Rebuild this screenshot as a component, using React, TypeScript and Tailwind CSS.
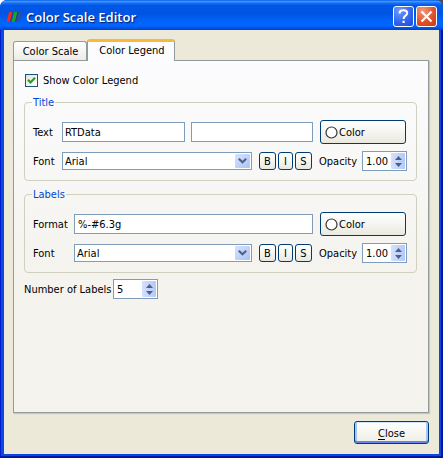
import { useState, type ReactNode } from "react";

const field =
  "h-5 min-w-0 border border-[#7f9db9] bg-white text-[11px] outline-none";
const pushButton =
  "rounded-[3px] border border-[#003c74] bg-linear-to-b from-white via-[#f5f5f1] to-[#e9e8df]";
const caption = "shrink-0 pt-[2px]";

function FontSelect({ id }: { id: string }) {
  return (
    <div className="relative flex h-[18px] min-w-0 flex-1 border border-[#7f9db9] bg-white">
      <select
        id={id}
        className="w-full appearance-none bg-white pt-[2px] pr-5 pl-[2px] text-[11px] leading-[14px] outline-none"
      >
        <option>Arial</option>
      </select>
      <span className="pointer-events-none absolute top-px right-px flex h-[14px] w-[15px] items-center justify-center rounded-[1px] bg-linear-to-br from-[#d6e2ff] to-[#acc3f6]">
        <svg width="9" height="6" viewBox="0 0 9 6" aria-hidden="true">
          <path d="M0.8 0.8L4.5 4.3L8.2 0.8" fill="none" stroke="#4d6185" strokeWidth="2.1" />
        </svg>
      </span>
    </div>
  );
}

function SpinBox({ id, value, step, digits }: { id: string; value: number; step: number; digits: number }) {
  const [current, setCurrent] = useState(value);
  return (
    <div className="flex h-5 w-[45px] shrink-0 border border-[#7f9db9] bg-white py-px pr-px">
      <input
        id={id}
        value={current.toFixed(digits)}
        onChange={(e) => setCurrent(Number(e.target.value) || 0)}
        className="w-0 min-w-0 flex-1 bg-white pt-[2px] pl-[3px] text-[11px] outline-none"
      />
      <div className="flex w-[14px] flex-col">
        <button
          type="button"
          aria-label="Increase"
          onClick={() => setCurrent(current + step)}
          className="flex h-2 items-center justify-center rounded-t-[1px] bg-linear-to-r from-[#d3e0ff] to-[#b3c9f9] pt-px"
        >
          <svg width="7" height="4" viewBox="0 0 7 4" aria-hidden="true">
            <path d="M0 4L3.5 0L7 4Z" fill="#4d6185" />
          </svg>
        </button>
        <button
          type="button"
          aria-label="Decrease"
          onClick={() => setCurrent(current - step)}
          className="flex h-2 items-center justify-center rounded-b-[1px] bg-linear-to-r from-[#d3e0ff] to-[#b3c9f9]"
        >
          <svg width="7" height="4" viewBox="0 0 7 4" aria-hidden="true">
            <path d="M0 0L3.5 4L7 0Z" fill="#4d6185" />
          </svg>
        </button>
      </div>
    </div>
  );
}

function ColorButton() {
  return (
    <button
      type="button"
      className={`${pushButton} flex h-6 w-[86px] shrink-0 items-center gap-px pl-1`}
    >
      <svg width="13" height="13" viewBox="0 0 13 13" aria-hidden="true">
        <circle cx="6.5" cy="6.5" r="5.5" fill="#fff" stroke="#333" strokeWidth="1.2" />
      </svg>
      <span className={caption}>Color</span>
    </button>
  );
}

function StyleButtons() {
  return (
    <div className="mx-[7px] flex shrink-0 gap-[2px]">
      <button type="button" className={`${pushButton} h-[18px] w-[17px] pt-[2px]`}>B</button>
      <button type="button" className={`${pushButton} h-[18px] w-[15px] pt-[2px]`}>I</button>
      <button type="button" className={`${pushButton} h-[18px] w-[17px] pt-[2px]`}>S</button>
    </div>
  );
}

function Group({ title, children }: { title: string; children: ReactNode }) {
  return (
    <fieldset className="min-w-0 rounded-[4px] border border-[#d0d0bf] px-[7px] pb-[9px]">
      <legend className="px-px pt-[2px] leading-3 text-[#0046d5]">{title}</legend>
      <div className="flex flex-col gap-[7px] pt-[11px] pl-px">{children}</div>
    </fieldset>
  );
}

function FontRow({ name, labelWidth }: { name: string; labelWidth: string }) {
  return (
    <div className="flex items-center pr-[2px]">
      <label htmlFor={`${name}-font`} className={`${labelWidth} ${caption}`}>Font</label>
      <FontSelect id={`${name}-font`} />
      <StyleButtons />
      <label htmlFor={`${name}-opacity`} className={`${caption} w-[43px]`}>Opacity</label>
      <SpinBox id={`${name}-opacity`} value={1} step={0.05} digits={2} />
    </div>
  );
}

export default function App() {
  return (
    <div className="bg-[linear-gradient(to_right,#ffffff_50%,#4b4b52_50%)]">
      <div className="flex min-h-screen flex-col overflow-hidden rounded-t-[7px] bg-[#0a48e0] font-['DejaVu_Sans_Condensed','DejaVu_Sans',sans-serif] text-[11px] leading-[14px] text-black">
        <header className="flex h-[30px] shrink-0 items-center bg-[linear-gradient(to_bottom,#0a5ce8_0%,#3f96ff_5%,#1a72f4_10%,#0058e6_18%,#0054e3_45%,#0062f8_70%,#0066ff_86%,#0050e0_94%,#003fd0_100%)] pt-[3px] pr-[6px] pl-[6px]">
          <svg width="16" height="12" viewBox="0 0 16 12" aria-hidden="true">
            <path d="M3 1H6.5L4 11H0.5Z" fill="#f02a2a" />
            <path d="M8 1H11.5L9 11H5.5Z" fill="#16a52b" />
            <path d="M12.5 1H16L13.5 11H10Z" fill="#2a50a8" />
            <path d="M7 1L4.5 11M12 1L9.5 11" stroke="#23406f" strokeWidth="1" />
          </svg>
          <h1 className="ml-1 flex-1 font-['Open_Sans','Noto_Sans',sans-serif] text-[13px] font-semibold text-white [text-shadow:1px_1px_1px_#0b1a70]">
            Color Scale Editor
          </h1>
          <button
            type="button"
            aria-label="Help"
            className="flex size-[21px] items-center justify-center rounded-[3px] border border-white bg-[radial-gradient(circle_at_30%_20%,#6f9bff,#2f62ea_60%,#1c4cdc)]"
          >
            <svg width="11" height="15" viewBox="0 0 11 15" fill="none" aria-hidden="true">
              <path d="M1.7 4.5V3.5Q2 1.2 5.5 1.2Q9.2 1.2 9.2 4Q9.2 5.5 7.3 6.8Q5.6 8 5.6 10" stroke="#fff" strokeWidth="2" />
              <path d="M4.5 11.8H6.7V14H4.5Z" fill="#fff" />
            </svg>
          </button>
          <button
            type="button"
            aria-label="Close window"
            className="ml-[2px] flex size-[21px] items-center justify-center rounded-[3px] border border-white bg-[radial-gradient(circle_at_30%_20%,#f09a82,#e0502c_55%,#c93a12)]"
          >
            <svg width="13" height="13" viewBox="0 0 13 13" aria-hidden="true">
              <path d="M1.5 1.5L11.5 11.5M11.5 1.5L1.5 11.5" stroke="#fff" strokeWidth="2.2" />
            </svg>
          </button>
        </header>

        <div className="flex flex-1 border-r-2 border-b-2 border-l border-[#0018a0] border-l-[#0020d0] bg-[#0a48e0] pr-[2px] pb-[2px] pl-[3px]">
          <main className="flex min-w-0 flex-1 flex-col bg-[#ece9d8] pt-[9px] pr-[10px] pb-[10px] pl-[9px]">
            <div role="tablist" className="flex items-end">
              <button
                type="button"
                role="tab"
                aria-selected="false"
                className="h-[19px] w-[74px] rounded-t-[3px] border border-b-0 border-[#919b9c] bg-linear-to-b from-white to-[#ecebe6] pt-px pl-px"
              >
                Color Scale
              </button>
              <button
                type="button"
                role="tab"
                aria-selected="true"
                className="relative -mb-px h-[22px] w-[88px] overflow-hidden rounded-t-[3px] border-x border-t-3 border-x-[#919b9c] border-t-[#f9b934] bg-[#fcfcfe] pb-px pl-[2px]"
              >
                Color Legend
              </button>
            </div>

            <section
              role="tabpanel"
              className="flex flex-1 flex-col border border-[#919b9c] bg-linear-to-b from-[#fcfcfe] to-[#f4f3ee] to-60% pt-3 pr-[11px] pl-[10px] shadow-[1px_1px_1px_#c9c7b8]"
            >
              <label className="flex items-center gap-[5px] pl-px">
                <input type="checkbox" defaultChecked className="peer sr-only" />
                <span className="flex size-[13px] items-center justify-center border border-[#1c5180] bg-linear-to-br from-[#e2e2dc] to-white peer-not-checked:[&>svg]:hidden">
                  <svg width="9" height="9" viewBox="0 0 9 9" aria-hidden="true">
                    <path d="M1 3.8L3.5 6.4L8 1.8" fill="none" stroke="#21a121" strokeWidth="2.2" />
                  </svg>
                </span>
                <span className="pt-[2px] leading-3">Show Color Legend</span>
              </label>

              <div className="flex flex-col gap-[6px] pt-2">
                <Group title="Title">
                  <div className="flex items-center pr-[3px]">
                    <label htmlFor="title-text" className={`${caption} w-[29px]`}>Text</label>
                    <input id="title-text" defaultValue="RTData" className={`${field} w-0 grow basis-[123px] pl-[2px]`} />
                    <input aria-label="Title second line" className={`${field} mr-[7px] ml-[6px] w-0 grow basis-[122px] pl-[2px]`} />
                    <ColorButton />
                  </div>
                  <FontRow name="title" labelWidth="w-[29px]" />
                </Group>

                <Group title="Labels">
                  <div className="flex items-center pr-[3px]">
                    <label htmlFor="labels-format" className={`${caption} w-[41px]`}>Format</label>
                    <input id="labels-format" defaultValue="%-#6.3g" className={`${field} mr-[7px] w-0 flex-1 pl-[3px]`} />
                    <ColorButton />
                  </div>
                  <FontRow name="labels" labelWidth="w-[41px]" />
                </Group>

                <div className="flex items-center">
                  <label htmlFor="label-count" className={`${caption} w-[89px] whitespace-nowrap`}>Number of Labels</label>
                  <SpinBox id="label-count" value={5} step={1} digits={0} />
                </div>
              </div>
            </section>

            <footer className="flex justify-end pt-2">
              <button
                type="button"
                className="h-[23px] w-[75px] rounded-[3px] border border-[#003c74] bg-linear-to-b from-white to-[#eeede5] pt-[2px] shadow-[inset_0_1px_0_#cee7ff,inset_0_-2px_0_#6982ee,inset_2px_0_0_#a9c4f5,inset_-2px_0_0_#a9c4f5]"
              >
                <span className="underline underline-offset-2">C</span>lose
              </button>
            </footer>
          </main>
        </div>
      </div>
    </div>
  );
}
